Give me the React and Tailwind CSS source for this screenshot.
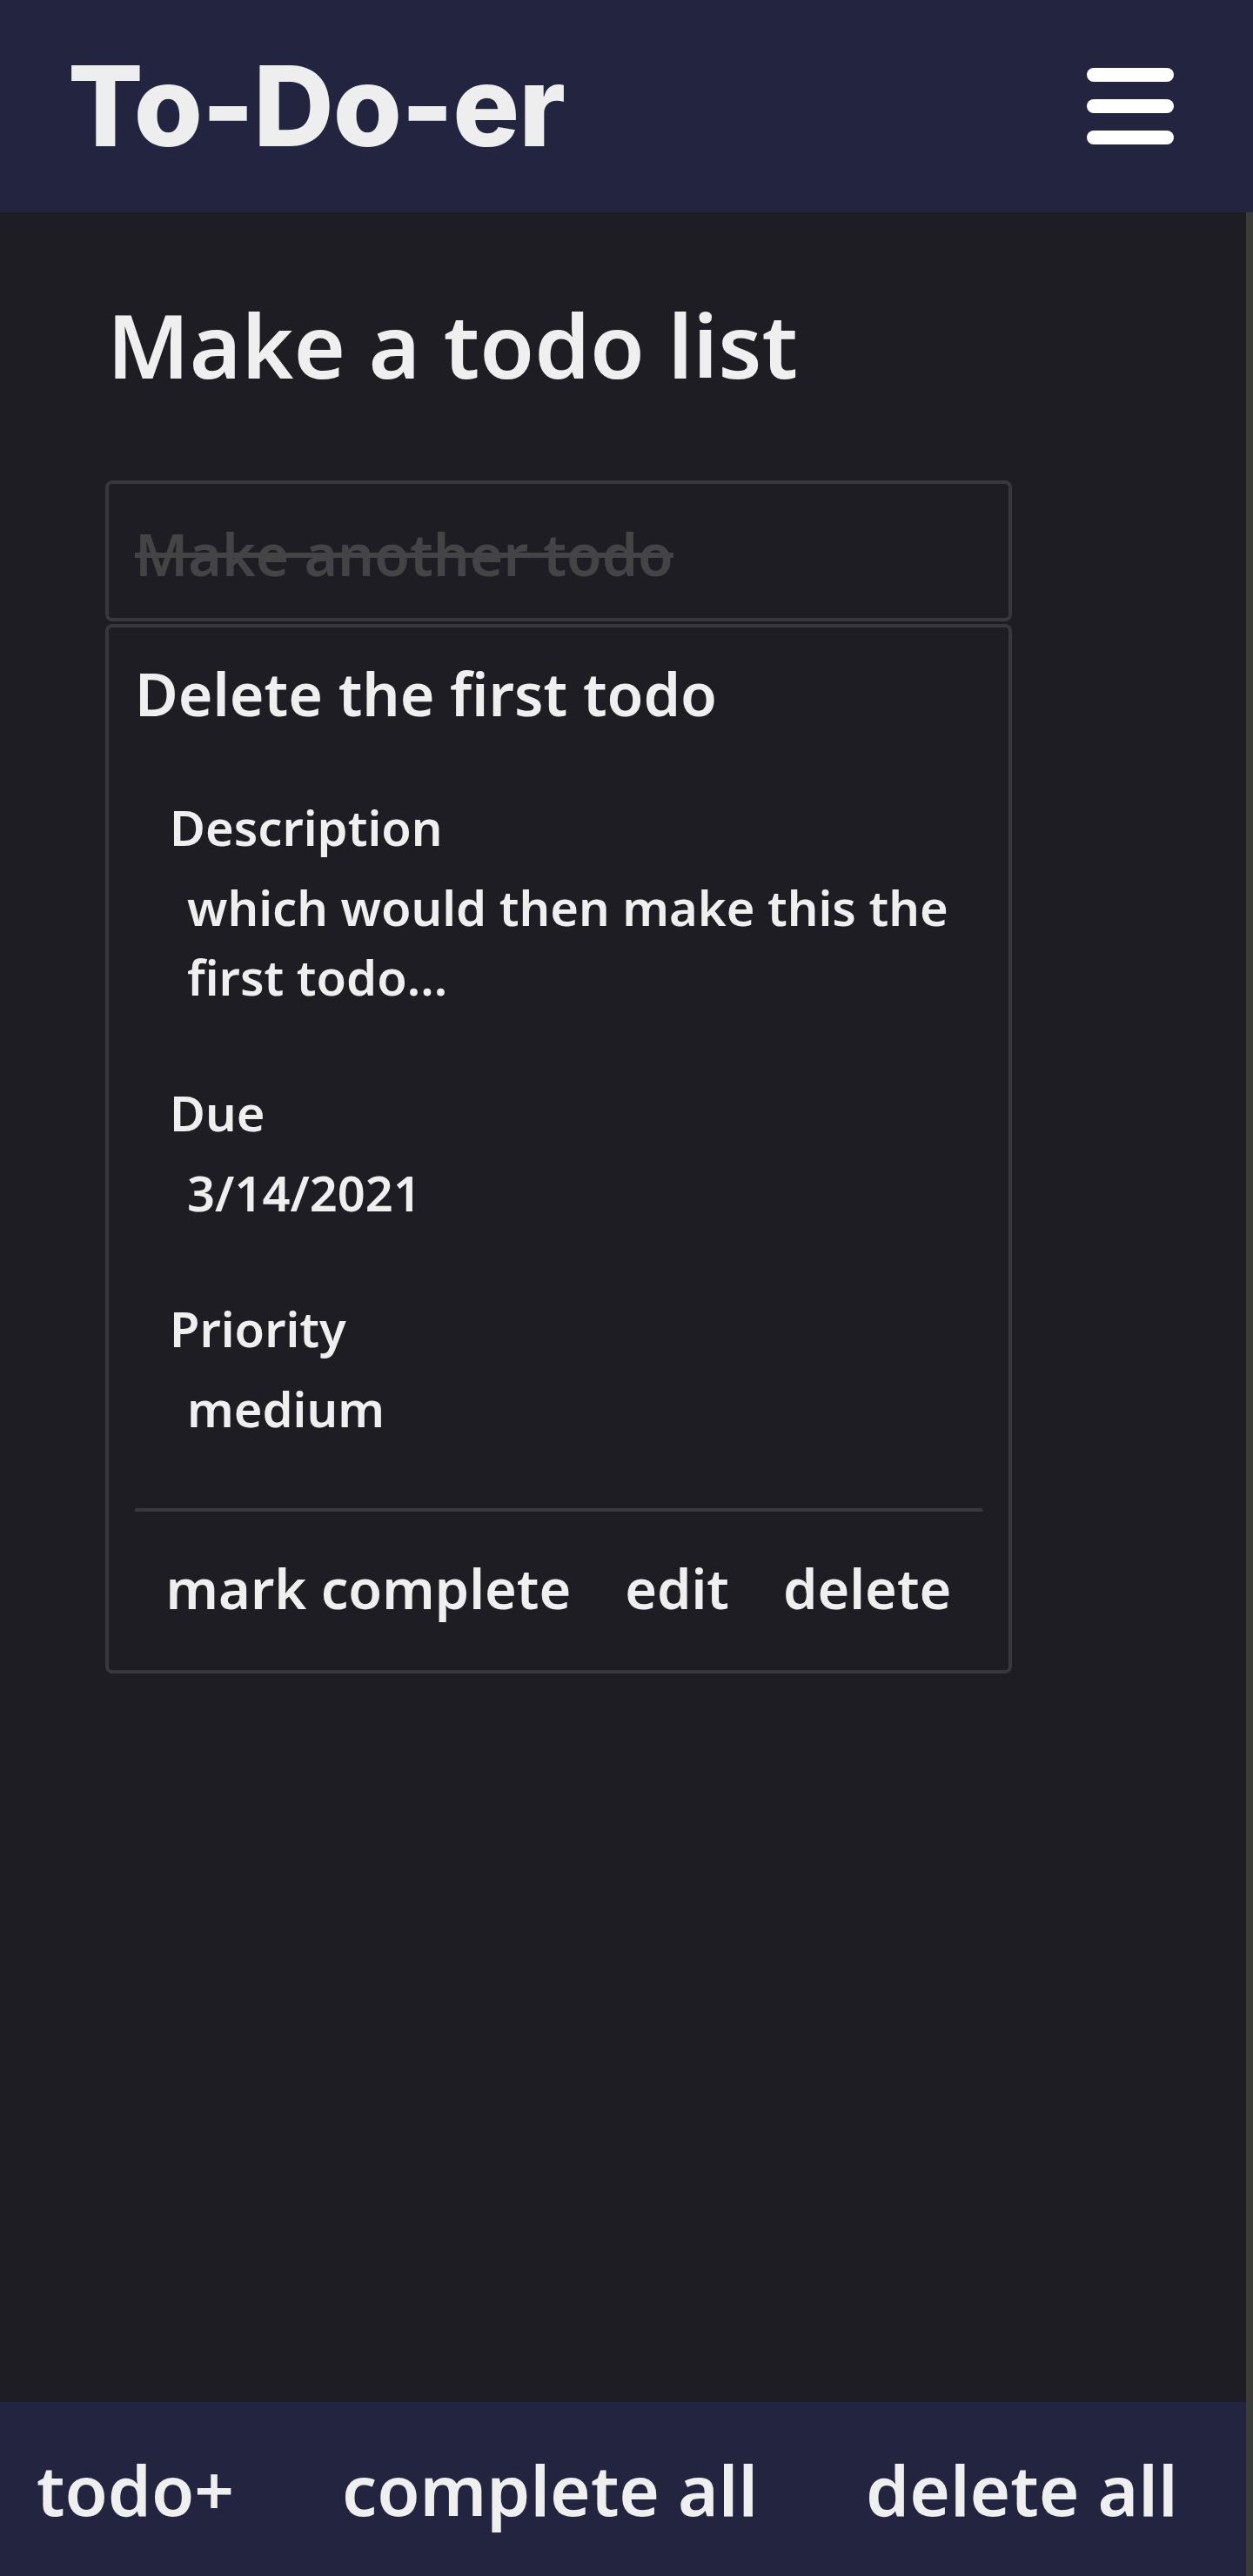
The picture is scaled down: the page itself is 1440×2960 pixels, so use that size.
import { useState } from 'react'

const todo = {
  title: 'Delete the first todo',
  description: 'which would then make this the first todo...',
  due: '3/14/2021',
  priority: 'medium',
}

const shadow = '[text-shadow:4px_4px_4px_#0b0b0e]'

function Field({ label, value }) {
  return (
    <div className="pl-[40px]">
      <div className="text-[56px] leading-[72px] font-semibold">{label}</div>
      <div className="pl-[20px] mt-[16px] text-[56px] leading-[80px] font-semibold">{value}</div>
    </div>
  )
}

export default function App() {
  const [text, setText] = useState('')

  return (
    <div className="h-[2960px] flex flex-col bg-[#1e1d23] text-[#efefef] font-['Noto_Sans',sans-serif]">
      <header className="h-[244px] shrink-0 bg-[#232540] flex items-center justify-between pl-[78px] pr-[91px]">
        <h1 className="font-['Inter',sans-serif] font-extrabold text-[128px] leading-none tracking-[-1px] text-[#eeeeee]">
          To-Do-er
        </h1>
        <button className="flex flex-col gap-[20px]">
          <span className="block w-[100px] h-[16px] rounded-full bg-white" />
          <span className="block w-[100px] h-[16px] rounded-full bg-white" />
          <span className="block w-[100px] h-[16px] rounded-full bg-white" />
        </button>
      </header>

      <div className="flex-1 flex">
        <div className="flex-1 flex flex-col">
          <main className="flex-1 pl-[121px] pt-[82px]">
            <div className="w-[1042px]">
              <h2 className="text-[102px] leading-[140px] font-semibold pl-[2px]">Make a todo list</h2>

              <div className="mt-[86px] h-[162px] border-[4px] border-[#38383c] rounded-[8px] pl-[30px] pt-[40px]">
                <input
                  value={text}
                  onChange={(e) => setText(e.target.value)}
                  placeholder="Make another todo"
                  className="w-full bg-transparent outline-none text-[66px] leading-[80px] font-semibold text-[#efefef] placeholder:text-[#444446] placeholder-shown:line-through decoration-[#444446]"
                />
              </div>

              <div className="mt-[3px] border-[4px] border-[#38383c] rounded-[8px] px-[30px] pt-[36px] pb-[54px]">
                <h3 className="text-[68px] leading-[80px] font-semibold">{todo.title}</h3>
                <div className="mt-[77px] flex flex-col gap-[80px]">
                  <Field label="Description" value={todo.description} />
                  <Field label="Due" value={todo.due} />
                  <Field label="Priority" value={todo.priority} />
                </div>
                <div className="mt-[75px] h-[4px] bg-[#38383c]" />
                <div className={`mt-[48px] flex justify-center gap-[62px] text-[63px] leading-[80px] font-semibold ${shadow}`}>
                  <button>mark complete</button>
                  <button>edit</button>
                  <button>delete</button>
                </div>
              </div>
            </div>
          </main>

          <footer className={`h-[200px] shrink-0 bg-[#232540] flex items-center pl-[42px] gap-[124px] text-[80px] leading-[100px] font-semibold ${shadow}`}>
            <button>todo+</button>
            <button>complete all</button>
            <button>delete all</button>
          </footer>
        </div>
        <div className="w-[8px] shrink-0 bg-[#3b3b39]" />
      </div>
    </div>
  )
}
